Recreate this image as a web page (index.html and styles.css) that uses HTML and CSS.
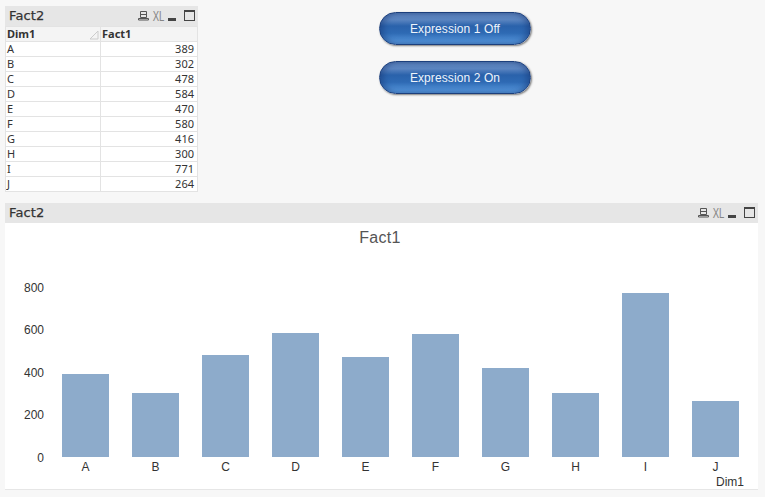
FILE: index.html
```html
<!DOCTYPE html>
<html lang="en">
<head>
<meta charset="utf-8">
<title>Fact2</title>
<link rel="stylesheet" href="styles.css">
</head>
<body>
<div class="top">
  <section class="box table-box">
    <header class="cap">
      <span class="cap-title">Fact2</span>
      <span class="cap-icons">
        <svg class="ico-print" width="11" height="11" viewBox="0 0 11 11"><path d="M2.5 1.5h6v6h-6zM2.5 4.5h6M.5 10V8.5h10V10z" fill="none" stroke="#555" stroke-width="1"/></svg>
        <span class="ico-xl">XL</span>
        <span class="ico-min"></span>
        <span class="ico-max"></span>
      </span>
    </header>
    <table class="grid">
      <thead>
        <tr><th class="c1">Dim1<svg class="sort" width="10" height="10" viewBox="0 0 10 10"><path d="M9 1v8H1z" fill="#f4f4f4" stroke="#ccc"/></svg></th><th class="c2">Fact1</th></tr>
      </thead>
      <tbody>
        <tr><td>A</td><td class="num">389</td></tr>
        <tr><td>B</td><td class="num">302</td></tr>
        <tr><td>C</td><td class="num">478</td></tr>
        <tr><td>D</td><td class="num">584</td></tr>
        <tr><td>E</td><td class="num">470</td></tr>
        <tr><td>F</td><td class="num">580</td></tr>
        <tr><td>G</td><td class="num">416</td></tr>
        <tr><td>H</td><td class="num">300</td></tr>
        <tr><td>I</td><td class="num">771</td></tr>
        <tr><td>J</td><td class="num">264</td></tr>
      </tbody>
    </table>
  </section>
  <div class="buttons">
    <button class="pill" type="button">Expression 1 Off</button>
    <button class="pill" type="button">Expression 2 On</button>
  </div>
</div>
<section class="box chart-box">
  <header class="cap">
    <span class="cap-title">Fact2</span>
    <span class="cap-icons">
      <svg class="ico-print" width="11" height="11" viewBox="0 0 11 11"><path d="M2.5 1.5h6v6h-6zM2.5 4.5h6M.5 10V8.5h10V10z" fill="none" stroke="#555" stroke-width="1"/></svg>
      <span class="ico-xl">XL</span>
      <span class="ico-min"></span>
      <span class="ico-max"></span>
    </span>
  </header>
  <div class="chart">
    <svg width="753" height="266" viewBox="5 223 753 266" class="plot">
      <text x="380" y="243" class="t-title" text-anchor="middle">Fact1</text>
      <g class="t-axis" text-anchor="end">
        <text x="44" y="292">800</text>
        <text x="44" y="334">600</text>
        <text x="44" y="377">400</text>
        <text x="44" y="419">200</text>
        <text x="44" y="462">0</text>
      </g>
      <g class="bars">
        <rect x="62" y="374" width="47" height="83"/>
        <rect x="132" y="393" width="47" height="64"/>
        <rect x="202" y="355" width="47" height="102"/>
        <rect x="272" y="333" width="47" height="124"/>
        <rect x="342" y="357" width="47" height="100"/>
        <rect x="412" y="334" width="47" height="123"/>
        <rect x="482" y="368" width="47" height="89"/>
        <rect x="552" y="393" width="47" height="64"/>
        <rect x="622" y="293" width="47" height="164"/>
        <rect x="692" y="401" width="47" height="56"/>
      </g>
      <g class="t-axis" text-anchor="middle">
        <text x="85.5" y="471">A</text>
        <text x="155.5" y="471">B</text>
        <text x="225.5" y="471">C</text>
        <text x="295.5" y="471">D</text>
        <text x="365.5" y="471">E</text>
        <text x="435.5" y="471">F</text>
        <text x="505.5" y="471">G</text>
        <text x="575.5" y="471">H</text>
        <text x="645.5" y="471">I</text>
        <text x="715.5" y="471">J</text>
      </g>
      <text x="744" y="486" class="t-axis" text-anchor="end">Dim1</text>
    </svg>
  </div>
</section>
</body>
</html>
```
FILE: styles.css
```css
* { box-sizing: border-box; }
html, body { margin: 0; height: 100%; }
body {
  background: #f7f7f7;
  font-family: "Noto Sans", sans-serif;
  color: #333;
  padding: 6px 7px 0 5px;
  overflow: hidden;
}
.top { display: flex; height: 197px; }
.box { background: #fff; }
.table-box { width: 193px; height: 185px; }
.cap {
  display: flex;
  align-items: center;
  justify-content: space-between;
  height: 20px;
  background: #e6e6e6;
  padding: 0 3px 1px 4px;
}
.cap-title { font: 13px/1 "DejaVu Sans", sans-serif; letter-spacing: .15px; color: #333; -webkit-text-stroke: .25px #333; }
.cap-icons { display: flex; align-items: center; gap: 4px; }
.ico-xl { font: 14px/1 "Liberation Sans", sans-serif; color: #858585; transform: scaleX(.68); width: 17px; margin: 0 -3px; display: block; text-align: center; }
.ico-min { width: 8px; height: 3px; background: #444; margin: 7px 4px 0 0; }
.ico-max { width: 11px; height: 11px; border: 1px solid #444; border-top-width: 2px; }
.grid { border-collapse: collapse; table-layout: fixed; width: 193px; font: 11px/1 "Noto Sans", sans-serif; color: #333; }
.grid th, .grid td { height: 15px; padding: 0 3px 2px 1px; border: 1px solid #e3e3e3; overflow: hidden; white-space: nowrap; }
.grid th { text-align: left; background: #f4f4f4; color: #333; position: relative; }
.c1 { width: 95px; }
.num { text-align: right; }
.sort { position: absolute; right: 1px; top: 3px; }
.buttons {
  margin-left: 181px;
  padding-top: 6px;
  display: flex;
  flex-direction: column;
  gap: 16px;
}
.pill {
  width: 152px;
  height: 33px;
  border-radius: 17px;
  border: 1px solid #1c3f7c;
  background: linear-gradient(#5f86bf 0, #5a84c0 22%, #2a62ab 42%, #2e6ab4 65%, #5c9de2 100%);
  box-shadow: 1px 1px 2px rgba(0, 0, 0, .5), inset 4px 0 5px rgba(20, 50, 110, .35), inset -4px 0 5px rgba(20, 50, 110, .35);
  color: #eef4fb;
  font: 12px/1 "Liberation Sans", sans-serif;
  letter-spacing: .1px;
  padding: 0;
}
.chart-box { width: 753px; height: 287px; border-bottom: 1px solid #e6e6e6; }
.chart { height: 266px; }
.plot { display: block; }
.bars rect { fill: #8dabcb; }
.t-title { font: 16px "Liberation Sans", sans-serif; letter-spacing: .3px; fill: #555; }
.t-axis { font: 12px "Liberation Sans", sans-serif; fill: #333; }
```
